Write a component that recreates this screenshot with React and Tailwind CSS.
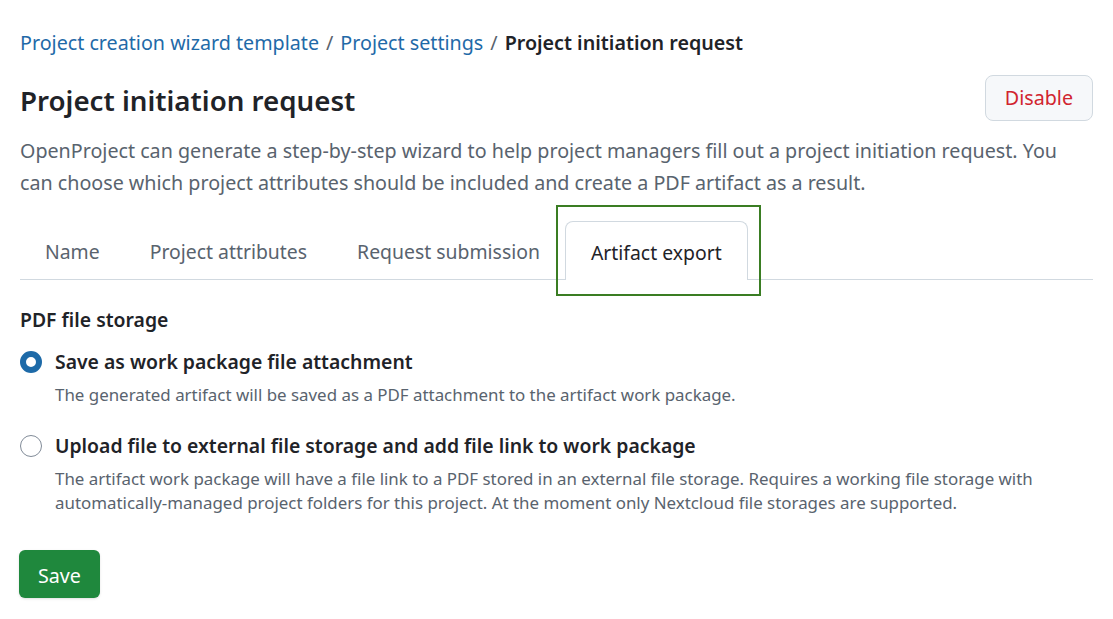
import React, { useState } from "react";

const tabs = ["Name", "Project attributes", "Request submission", "Artifact export"];

const options = [
  {
    id: "attachment",
    label: "Save as work package file attachment",
    help: "The generated artifact will be saved as a PDF attachment to the artifact work package.",
  },
  {
    id: "external",
    label: "Upload file to external file storage and add file link to work package",
    help: "The artifact work package will have a file link to a PDF stored in an external file storage. Requires a working file storage with automatically-managed project folders for this project. At the moment only Nextcloud file storages are supported.",
  },
];

const Radio = ({ checked }) =>
  checked ? (
    <span className="mt-[5px] block h-[22px] w-[22px] shrink-0 rounded-full border-[6px] border-[#1d6aa8] bg-white" />
  ) : (
    <span className="mt-[5px] block h-[22px] w-[22px] shrink-0 rounded-full border border-[#818b98] bg-white" />
  );

export default function App() {
  const [storage, setStorage] = useState("attachment");

  return (
    <div
      className="min-h-screen bg-white px-5 pt-[28px] text-[#1f2328]"
      style={{ fontFamily: '"Noto Sans", "Open Sans", sans-serif' }}
    >
      {/* breadcrumb */}
      <nav className="flex items-center gap-[7px] text-[19.7px] leading-[30px]">
        <a className="text-[#1f6aa8]">Project creation wizard template</a>
        <span className="text-[#59636e]">/</span>
        <a className="text-[#1f6aa8]">Project settings</a>
        <span className="text-[#59636e]">/</span>
        <span className="font-semibold">Project initiation request</span>
      </nav>

      {/* header */}
      <div className="mt-[17px] flex items-center justify-between">
        <h1 className="pt-[4px] text-[27.7px] font-semibold leading-[40px]">Project initiation request</h1>
        <button className="h-[46px] rounded-lg border border-[#d1d9e0] bg-[#f6f8fa] px-[19px] text-[19.7px] text-[#d1242f]">
          Disable
        </button>
      </div>

      <p className="mt-[14px] text-[19.7px] leading-[32px] text-[#59636e]">
        OpenProject can generate a step-by-step wizard to help project managers fill out a project initiation request. You
        can choose which project attributes should be included and create a PDF artifact as a result.
      </p>

      {/* tabs */}
      <div className="mt-[22px] flex h-[59px] items-stretch border-b border-[#d1d9e0]">
        {tabs.map((t, i) =>
          i === tabs.length - 1 ? (
            <div
              key={t}
              className="relative -mb-px flex items-center rounded-t-lg border border-b-0 border-[#d1d9e0] bg-white px-[25px] pt-[3px] text-[19.4px] text-[#1f2328]"
            >
              {t}
              <span className="pointer-events-none absolute -bottom-[16px] -left-[10px] -right-[14px] -top-[17px] border-2 border-[#3a7d23]" />
            </div>
          ) : (
            <div key={t} className="flex items-center px-[25px] pt-[3px] text-[19.4px] text-[#59636e]">
              {t}
            </div>
          )
        )}
      </div>

      {/* form */}
      <h2 className="mt-[25px] text-[19.4px] font-semibold leading-[30px]">PDF file storage</h2>

      <div className="mt-[11px] flex flex-col gap-[23px]">
        {options.map((o) => (
          <label key={o.id} className="flex cursor-pointer gap-[13px]" onClick={() => setStorage(o.id)}>
            <Radio checked={storage === o.id} />
            <div>
              <div className="text-[19.4px] font-semibold leading-[32px]">{o.label}</div>
              <div className="mt-[5px] text-[16.9px] leading-[24px] text-[#59636e]">{o.help}</div>
            </div>
          </label>
        ))}
      </div>

      <button className="-ml-px mt-[35px] h-[48px] rounded-md bg-[#1f883d] px-[19px] pt-[3px] text-[19.7px] text-white shadow-sm">
        Save
      </button>
    </div>
  );
}
